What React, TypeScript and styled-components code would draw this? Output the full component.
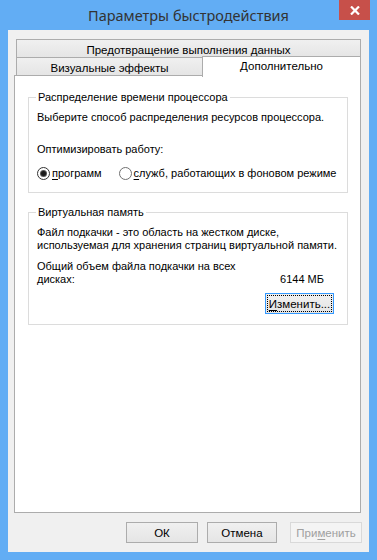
import * as React from "react";
import styled, { createGlobalStyle } from "styled-components";

const GlobalStyle = createGlobalStyle`
  html, body {
    margin: 0;
    padding: 0;
    background: #62adf4;
  }
  body {
    font-family: "Liberation Sans", Arial, sans-serif;
    font-size: 11px;
    color: #000;
  }
`;

const Window = styled.div`
  width: 377px;
  height: 560px;
  background: #62adf4;
  display: flex;
  flex-direction: column;
  box-sizing: border-box;
`;

const TitleBar = styled.div`
  height: 30px;
  display: grid;
  grid-template-columns: 1fr auto 1fr;
  align-items: start;
`;

const Title = styled.div`
  grid-column: 2;
  font-family: "Noto Sans", "Open Sans", sans-serif;
  font-size: 14.5px;
  color: #333;
  line-height: 30px;
`;

const CloseButton = styled.div`
  grid-column: 3;
  justify-self: end;
  margin-right: 7px;
  width: 31px;
  height: 20px;
  background: #c7504a;
  display: flex;
  align-items: center;
  justify-content: center;
`;

const Client = styled.div`
  flex: 1;
  margin: 0 8px 8px 8px;
  background: #f0f0f0;
  display: flex;
  flex-direction: column;
  padding: 9px 8px 0 6px;
  box-sizing: border-box;
`;

const TabRow = styled.div`
  display: flex;
  margin-left: 2px;
  height: 18px;
  align-items: flex-end;
`;

const Tab = styled.div<{ $width: number; $active?: boolean }>`
  width: ${(p) => p.$width}px;
  height: ${(p) => (p.$active ? 21 : 19)}px;
  box-sizing: border-box;
  border: 1px solid #acacac;
  border-bottom: ${(p) => (p.$active ? "none" : "1px solid #acacac")};
  background: ${(p) =>
    p.$active ? "#fff" : "linear-gradient(#f0f0f0, #e5e5e5)"};
  display: flex;
  align-items: center;
  justify-content: center;
  font-size: 11.5px;
  padding-top: ${(p) => (p.$active ? 0 : 2)}px;
  padding-bottom: ${(p) => (p.$active ? 3 : 0)}px;
  position: relative;
  z-index: ${(p) => (p.$active ? 2 : 0)};
  margin-bottom: ${(p) => (p.$active ? -2 : -1)}px;
  margin-left: ${(p) => (p.$active ? -1 : 0)}px;
`;

const Panel = styled.div`
  width: 347px;
  height: 438px;
  box-sizing: border-box;
  background: #fff;
  border: 1px solid #acacac;
  position: relative;
  z-index: 1;
  padding: 14px 12px 0 13px;
  display: flex;
  flex-direction: column;
  gap: 12px;
`;

const Group = styled.fieldset<{ $height: number }>`
  margin: 0;
  min-width: 0;
  padding: 0 8px;
  border: 1px solid #dcdcdc;
  height: ${(p) => p.$height}px;
  box-sizing: border-box;
  display: flex;
  flex-direction: column;
`;

const Legend = styled.legend`
  padding: 0 2px;
  margin-left: -1px;
  line-height: 15px;
`;

const Line = styled.div<{ $top?: number }>`
  margin-top: ${(p) => p.$top ?? 0}px;
  line-height: 13px;
  white-space: nowrap;
`;

const RadioRow = styled.div`
  display: flex;
  align-items: center;
  margin-top: 9px;
  height: 16px;
`;

const RadioOption = styled.label<{ $gap?: number }>`
  display: flex;
  align-items: center;
  margin-left: ${(p) => p.$gap ?? 0}px;
  white-space: nowrap;
`;

const RadioCircle = styled.span<{ $checked?: boolean }>`
  width: 13px;
  height: 13px;
  border-radius: 50%;
  box-sizing: border-box;
  border: 1px solid ${(p) => (p.$checked ? "#333" : "#707070")};
  background: #fff;
  display: flex;
  align-items: center;
  justify-content: center;
  margin-right: 2px;

  &::after {
    content: "";
    display: ${(p) => (p.$checked ? "block" : "none")};
    width: 5px;
    height: 5px;
    border-radius: 50%;
    background: #1a1a1a;
    box-shadow: 0 0 0 1px #555;
  }
`;

const Key = styled.span`
  text-decoration: underline;
  text-underline-offset: 2px;
`;

const SizeRow = styled.div`
  display: flex;
  justify-content: space-between;
  align-items: flex-end;
  padding-right: 15px;
`;

const ButtonRow = styled.div<{ $pad?: number }>`
  display: flex;
  justify-content: flex-end;
  padding-right: ${(p) => p.$pad ?? 0}px;
`;

const Button = styled.button<{ $width: number; $focus?: boolean }>`
  width: ${(p) => p.$width}px;
  height: 21px;
  box-sizing: border-box;
  font-family: inherit;
  font-size: 11.5px;
  color: #000;
  border: 1px solid ${(p) => (p.$focus ? "#3399ff" : "#acacac")};
  background: linear-gradient(#f0f0f0, #e5e5e5);
  padding: 0;
  display: flex;
  align-items: center;
  justify-content: center;
  outline: ${(p) => (p.$focus ? "1px dotted #000" : "none")};
  outline-offset: -3px;

  &:disabled {
    color: #a0a0a0;
    border-color: #d9d9d9;
    background: #f4f4f4;
  }
`;

const Footer = styled.div`
  display: flex;
  justify-content: flex-end;
  gap: 9px;
  margin-top: 9px;
  margin-right: -1px;
`;

const App: React.FunctionComponent = () => {
  return (
    <Window>
      <GlobalStyle />
      <TitleBar>
        <Title>Параметры быстродействия</Title>
        <CloseButton>
          <svg width="10" height="9" viewBox="0 0 10 9">
            <path
              d="M1 0.5 L9 8.5 M9 0.5 L1 8.5"
              stroke="#fff"
              strokeWidth="2.2"
            />
          </svg>
        </CloseButton>
      </TitleBar>
      <Client>
        <TabRow>
          <Tab $width={345}>Предотвращение выполнения данных</Tab>
        </TabRow>
        <TabRow>
          <Tab $width={187}>Визуальные эффекты</Tab>
          <Tab $width={159} $active>
            Дополнительно
          </Tab>
        </TabRow>
        <Panel>
          <Group $height={103}>
            <Legend>Распределение времени процессора</Legend>
            <Line $top={6}>Выберите способ распределения ресурсов процессора.</Line>
            <Line $top={19}>Оптимизировать работу:</Line>
            <RadioRow>
              <RadioOption>
                <RadioCircle $checked />
                <span>
                  <Key>п</Key>рограмм
                </span>
              </RadioOption>
              <RadioOption $gap={17}>
                <RadioCircle />
                <span>
                  <Key>с</Key>лужб, работающих в фоновом режиме
                </span>
              </RadioOption>
            </RadioRow>
          </Group>
          <Group $height={120}>
            <Legend>Виртуальная память</Legend>
            <Line $top={6}>Файл подкачки - это область на жестком диске,</Line>
            <Line>используемая для хранения страниц виртуальной памяти.</Line>
            <Line $top={8}>Общий объем файла подкачки на всех</Line>
            <SizeRow>
              <Line>дисках:</Line>
              <Line>6144 МБ</Line>
            </SizeRow>
            <ButtonRow $pad={5}>
              <Button $width={69} $focus style={{ marginTop: 7 }}>
                <Key>И</Key>зменить...
              </Button>
            </ButtonRow>
          </Group>
        </Panel>
        <Footer>
          <Button $width={72}>ОК</Button>
          <Button $width={70}>Отмена</Button>
          <Button $width={72} disabled style={{ marginLeft: 4 }}>
            При<Key>м</Key>енить
          </Button>
        </Footer>
      </Client>
    </Window>
  );
};

export default App;
